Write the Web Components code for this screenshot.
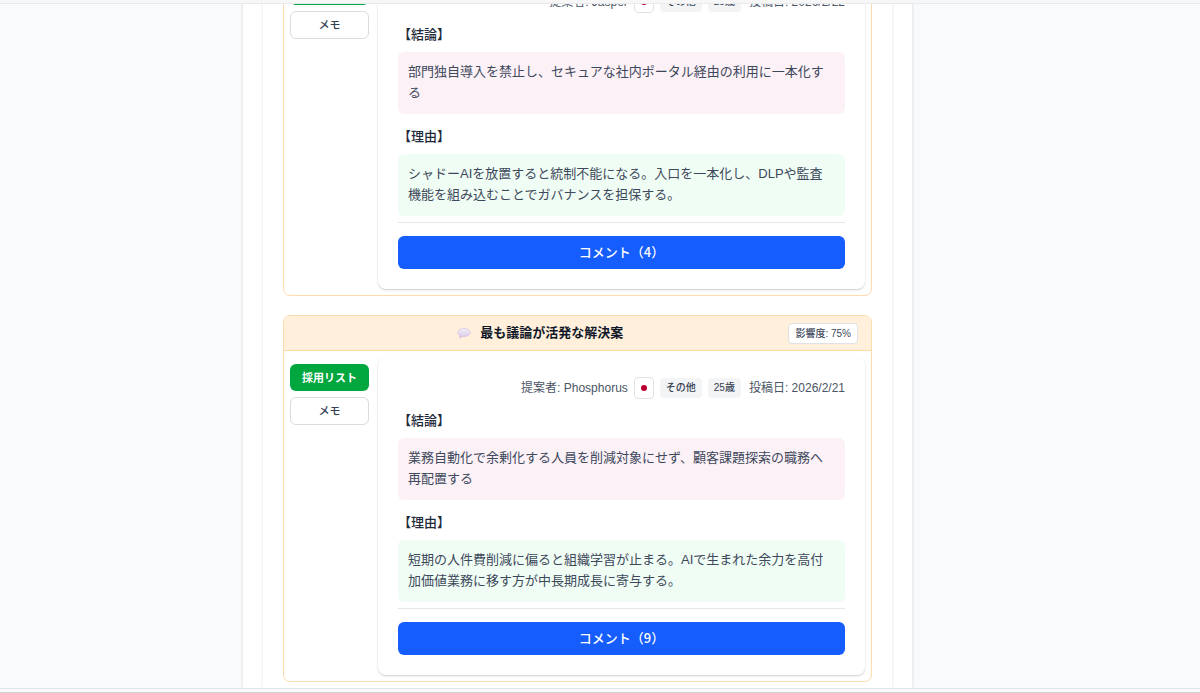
<!DOCTYPE html>
<html lang="ja">
<head>
<meta charset="utf-8">
<meta name="viewport" content="width=device-width, initial-scale=1">
<title>解決案</title>
<style>
    body {
        margin: 0;
        font-family: "Liberation Sans", "Noto Sans CJK JP", sans-serif;
        font-size: 13px;
        line-height: 21px;
        color: #3d485b;
        background: #f9fafb;
    }
</style>
</head>
<body>
<idea-page>
    <solution-card author="Jasper" field="その他" age="25歳" date="2026/2/22" comments="4">
        <span slot="conclusion">部門独自導入を禁止し、セキュアな社内ポータル経由の利用に一本化する</span>
        <span slot="reason">シャドーAIを放置すると統制不能になる。入口を一本化し、DLPや監査機能を組み込むことでガバナンスを担保する。</span>
    </solution-card>
    <solution-card heading="最も議論が活発な解決案" impact="75%" author="Phosphorus" field="その他" age="25歳" date="2026/2/21" comments="9">
        <span slot="conclusion">業務自動化で余剰化する人員を削減対象にせず、顧客課題探索の職務へ再配置する</span>
        <span slot="reason">短期の人件費削減に偏ると組織学習が止まる。AIで生まれた余力を高付加価値業務に移す方が中長期成長に寄与する。</span>
    </solution-card>
</idea-page>

<script>
class IdeaPage extends HTMLElement {
    constructor() {
        super();
        this._shadowRoot = this.attachShadow({mode: "open"})
    }

    connectedCallback() {
        this._shadowRoot.innerHTML = `
            <style>
            :host {
                display: grid;
                grid-template-rows: auto minmax(0, 1fr) auto;
                height: 100vh;
            }
            .top {
                height: 3px;
                background: #f7f7f7;
                border-bottom: 1px solid #e8e9ea;
            }
            .bottom {
                height: 3px;
                background: #fafafa;
                border-top: 1px solid #e2e3e4;
                border-bottom: 1px solid #d0d1d2;
            }
            /* the list rests at its end, older cards run off the top */
            main {
                display: flex;
                flex-direction: column;
                justify-content: flex-end;
                align-items: center;
                padding-right: 45px;
                overflow: hidden;
            }
            .sheet {
                box-sizing: border-box;
                width: 100%;
                max-width: 669px;
                padding: 0 20px;
                background: #fff;
                box-shadow: 0 0 3px rgba(0, 0, 0, 0.16);
            }
            .list {
                display: flex;
                flex-direction: column;
                gap: 19px;
                padding: 0 20px 6px;
                box-shadow: 0 0 3px rgba(0, 0, 0, 0.12);
            }
            </style>
            <div class="top"></div>
            <main>
                <div class="sheet">
                    <div class="list"><slot></slot></div>
                </div>
            </main>
            <div class="bottom"></div>
        `
    }
}

class IdeaButton extends HTMLElement {
    constructor() {
        super();
        this._shadowRoot = this.attachShadow({mode: "open"})
    }

    connectedCallback() {
        this._shadowRoot.innerHTML = `
            <style>
            :host {
                display: block;
            }
            button {
                display: block;
                box-sizing: border-box;
                width: 100%;
                height: 28px;
                padding: 0 0 2px;
                border: 1px solid #d9dce1;
                border-radius: 6px;
                background: #fff;
                color: #364153;
                font: 500 11px/16px "Noto Sans CJK JP", sans-serif;
                cursor: pointer;
            }
            :host([kind="adopt"]) button {
                height: 27px;
                border: 0;
                background: #00a63e;
                color: #fff;
                font-weight: 700;
            }
            :host([kind="comment"]) button {
                height: 33px;
                border: 0;
                background: #155dfc;
                color: #fff;
                font-size: 13px;
            }
            </style>
            <button type="button"><slot></slot></button>
        `
    }
}

class MetaRow extends HTMLElement {
    constructor() {
        super();
        this._shadowRoot = this.attachShadow({mode: "open"})
    }

    connectedCallback() {
        this._shadowRoot.innerHTML = `
            <style>
            :host {
                display: flex;
                justify-content: flex-end;
                align-items: center;
                gap: 6px;
                height: 21px;
                font-size: 12px;
                line-height: 20px;
                color: #4a5565;
                white-space: nowrap;
            }
            .flag {
                display: flex;
                align-items: center;
                justify-content: center;
                width: 18px;
                height: 20px;
                border: 1px solid #dfe1e5;
                border-radius: 4px;
                background: #fff;
            }
            .tag {
                padding: 0 6px;
                border-radius: 4px;
                background: #f3f4f6;
                color: #364153;
                font-size: 10px;
                font-weight: 500;
            }
            .date {
                padding-left: 2px;
            }
            </style>
            <span>提案者: ${this.getAttribute('author')}</span>
            <span class="flag">
                <svg width="14" height="10" viewBox="0 0 14 10" role="img" aria-label="日本">
                    <rect width="14" height="10" fill="#fff"/>
                    <circle cx="7" cy="5" r="3" fill="#bc002d"/>
                </svg>
            </span>
            <span class="tag">${this.getAttribute('field')}</span>
            <span class="tag">${this.getAttribute('age')}</span>
            <span class="date">投稿日: ${this.getAttribute('date')}</span>
        `
    }
}

class SolutionCard extends HTMLElement {
    constructor() {
        super();
        this._shadowRoot = this.attachShadow({mode: "open"})
    }

    connectedCallback() {
        this._shadowRoot.innerHTML = `
            <style>
            :host {
                display: block;
                border: 1px solid #fddcae;
                border-radius: 7px;
                background: #fff;
                overflow: hidden;
            }
            header {
                display: flex;
                align-items: center;
                gap: 5px;
                height: 34px;
                padding: 0 13px;
                background: #ffefdb;
                border-bottom: 1px solid #ffd9a3;
            }
            .title {
                flex: 1;
                display: flex;
                align-items: center;
                justify-content: center;
                gap: 9px;
            }
            h2 {
                margin: 0;
                padding-bottom: 1px;
                font-size: 13px;
                font-weight: 700;
                line-height: 20px;
                color: #101828;
            }
            .impact {
                padding: 0 6px;
                border: 1px solid #dfe1e5;
                border-radius: 4px;
                background: #fff;
                font-size: 10px;
                font-weight: 500;
                line-height: 19px;
            }
            .body {
                display: grid;
                grid-template-columns: 79px minmax(0, 1fr);
                gap: 9px;
                padding: 6px;
            }
            .actions {
                display: flex;
                flex-direction: column;
                gap: 6px;
                padding-top: 7px;
            }
            article {
                padding: 20px;
                border-radius: 8px;
                background: #fff;
                box-shadow: 0 1px 2px rgba(0, 0, 0, 0.2);
            }
            h3 {
                margin: 13px 0 7px;
                font-size: 13px;
                font-weight: 500;
                line-height: 20px;
                color: #1e2939;
            }
            p {
                margin: 0;
                padding: 9px 10px 11px;
                border-radius: 6px;
            }
            .conclusion {
                background: #fcf1f7;
            }
            .reason {
                background: #f0fdf4;
            }
            .foot {
                margin-top: 6px;
                padding-top: 13px;
                border-top: 1px solid #e5e7eb;
            }
            </style>
            ${this.headerHTML()}
            <div class="body">
                <div class="actions">
                    <idea-button kind="adopt">採用リスト</idea-button>
                    <idea-button>メモ</idea-button>
                </div>
                <article>
                    <meta-row author="${this.getAttribute('author')}" field="${this.getAttribute('field')}" age="${this.getAttribute('age')}" date="${this.getAttribute('date')}"></meta-row>
                    <h3>【結論】</h3>
                    <p class="conclusion"><slot name="conclusion"></slot></p>
                    <h3>【理由】</h3>
                    <p class="reason"><slot name="reason"></slot></p>
                    <div class="foot">
                        <idea-button kind="comment">コメント（${this.getAttribute('comments')}）</idea-button>
                    </div>
                </article>
            </div>
        `
    }

    headerHTML() {
        if (!this.hasAttribute('heading')) {
            return ''
        }
        return `
            <header>
                <div class="title">
                    <svg width="14" height="12" viewBox="0 0 14 12" aria-hidden="true">
                        <defs>
                            <linearGradient id="bubble" x1="0" y1="0" x2="0" y2="1">
                                <stop offset="0" stop-color="#f6effb"/>
                                <stop offset="1" stop-color="#d6c8e8"/>
                            </linearGradient>
                        </defs>
                        <path d="M7 1.5C3.6 1.5 1 3.2 1 5.5c0 1.4.8 2.500 2.100 3.200C3 9.600 2.700 10.200 2.200 10.800c1.300-.1 2.400-.6 3.100-1.400.5.100 1.100.1 1.700.1 3.400 0 6-1.700 6-4s-2.600-4-6-4z" fill="url(#bubble)" stroke="#c5b3da" stroke-width=".5"/>
                    </svg>
                    <h2>${this.getAttribute('heading')}</h2>
                </div>
                <span class="impact">影響度: ${this.getAttribute('impact')}</span>
            </header>
        `
    }
}

window.customElements.define('idea-page', IdeaPage)
window.customElements.define('idea-button', IdeaButton)
window.customElements.define('meta-row', MetaRow)
window.customElements.define('solution-card', SolutionCard)
</script>
</body>
</html>
